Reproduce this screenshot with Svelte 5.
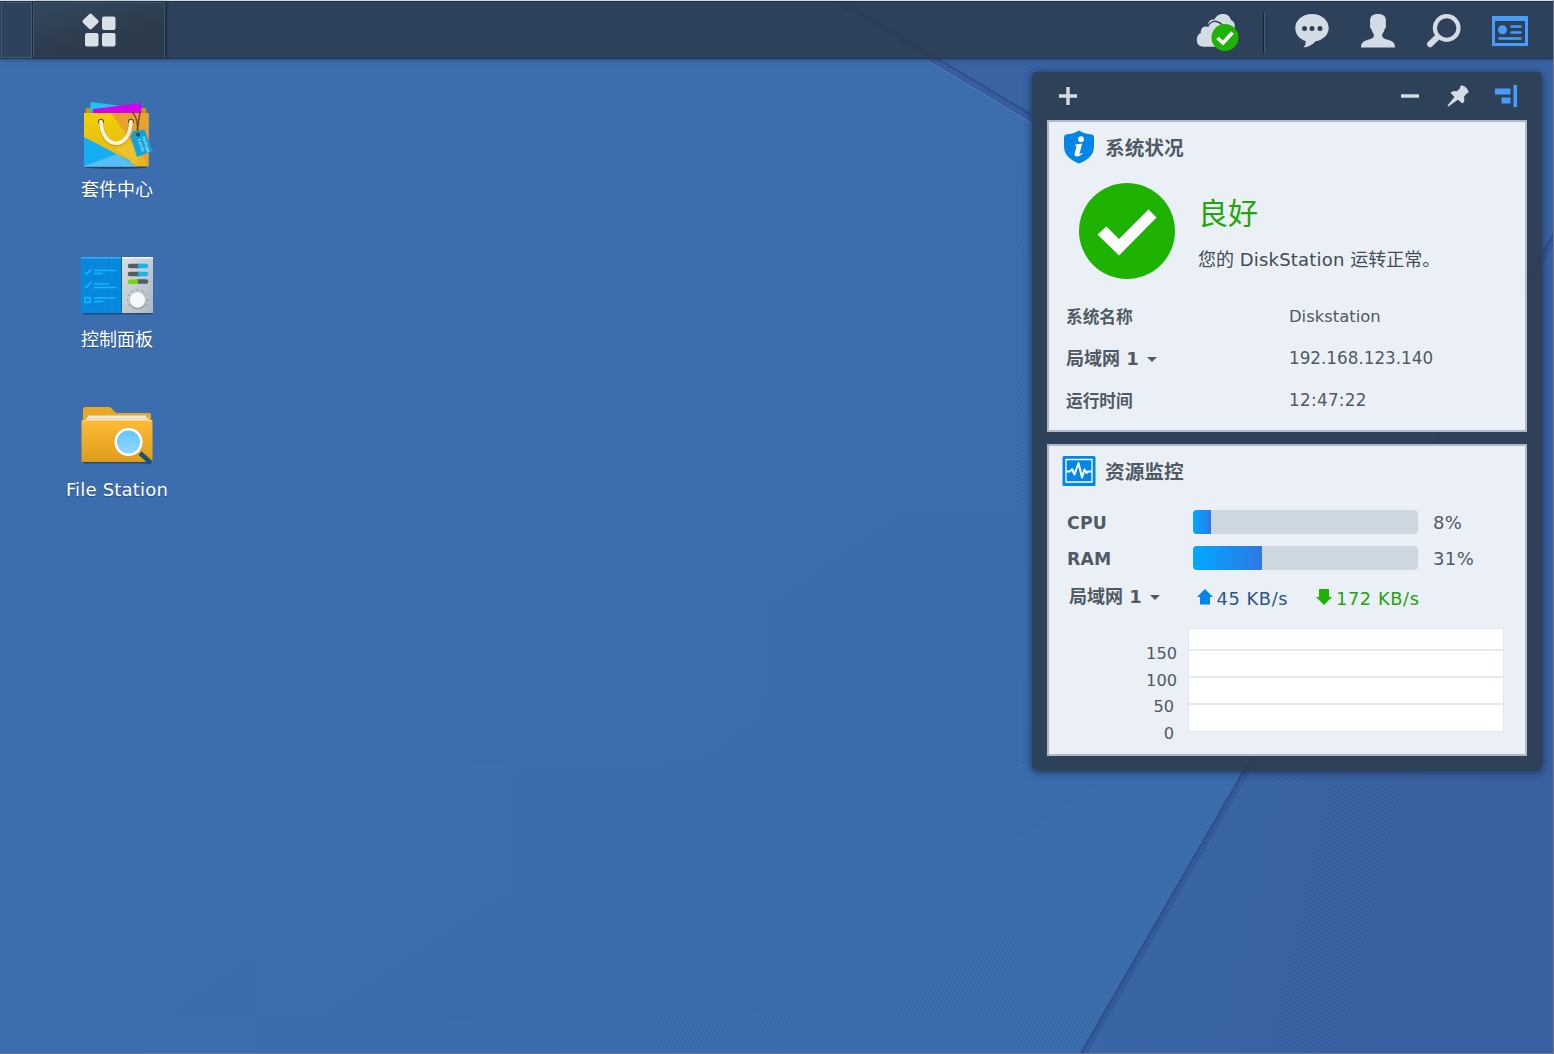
<script>
  const info = [
    { label: '系统名称', value: 'Diskstation', cls: 'name' },
    { label: '局域网 1', value: '192.168.123.140', cls: 'ip', menu: true },
    { label: '运行时间', value: '12:47:22', cls: 'time' }
  ];
  const meters = [
    { label: 'CPU', value: 8 },
    { label: 'RAM', value: 31 }
  ];
  const ticks = [150, 100, 50, 0];
  const knobDots = [-120, -90, -60, -30, 0, 30, 60, 90, 120];
</script>

<div class="desktop">
  <svg class="wallpaper" width="1554" height="1054" viewBox="0 0 1554 1054" aria-hidden="true">
    <defs>
      <linearGradient id="base" x1="0" y1="0" x2="1" y2="1">
        <stop offset="0" stop-color="#3d6fb0" />
        <stop offset="1" stop-color="#3a6cae" />
      </linearGradient>
      <linearGradient id="fold" x1="0" y1="0" x2="1" y2="0.4">
        <stop offset="0" stop-color="#3969a7" />
        <stop offset="1" stop-color="#3960a0" />
      </linearGradient>
      <pattern id="weave" width="4" height="4" patternUnits="userSpaceOnUse">
        <rect width="2" height="1" fill="#20467f" opacity=".13" />
        <rect x="2" y="2" width="2" height="1" fill="#20467f" opacity=".13" />
        <rect x="2" y="1" width="1" height="1" fill="#5f91cc" opacity=".14" />
        <rect y="3" width="1" height="1" fill="#5f91cc" opacity=".14" />
      </pattern>
    </defs>
    <rect width="1554" height="1054" fill="url(#base)" />
    <path d="M838 0 1468 375 1554 232V0z" fill="#3a64a4" />
    <path d="M1080 1054 1554 232V1054z" fill="url(#fold)" />
    <path d="M827 0H838L1468 375V383z" fill="#375d9f" />
    <path d="M839 0 1468 375" stroke="#2c4f86" stroke-width="1.800" />
    <path d="M826 0 1468 385" stroke="#4d7dba" stroke-width="1.200" />
    <path d="M1080 1054 1554 232V244L1087 1054z" fill="#335a9b" />
    <path d="M1080.500 1054 1554 233" stroke="#2c5089" stroke-width="2" />
    <rect width="1554" height="1054" fill="url(#weave)" />
  </svg>

  <header class="taskbar">
    <div class="show-desktop"></div>
    <div class="main-menu">
      <svg width="36" height="36" viewBox="0 0 36 36">
        <g fill="#d8e0ea">
          <rect x="3.300" y="2.300" width="12.400" height="12.400" rx="2" transform="rotate(45 9.500 8.500)" />
          <rect x="21" y="3.500" width="13.500" height="13.500" rx="2" />
          <rect x="4" y="20" width="13.500" height="13.500" rx="2" />
          <rect x="21" y="20" width="13.500" height="13.500" rx="2" />
        </g>
      </svg>
    </div>
    <nav class="tray">
      <svg class="cloud" width="44" height="40" viewBox="0 0 44 40">
        <g fill="#d3dbe5">
          <path d="M12 13c0-4 3-6 6.500-5.500C20.500 3.500 23 2 27 2c4 0 7 2 8 6 3.500 1.500 4.500 5 3.500 8l-2 6-17-6z" />
          <path d="M7 35.500C2.500 35 0 32 0 28s2-6.500 4-7.500c-.5-4 3-8 8-6.500C14 10 18 8.500 22 10s6 5 6 8l8 8-6 9.500z" stroke="#2f415a" stroke-width="1.600" />
        </g>
        <circle cx="29" cy="25.500" r="13.500" fill="#1eb302" />
        <path d="M21.500 26 27 31 36.500 20.500" fill="none" stroke="#fff" stroke-width="3.600" />
      </svg>
      <span class="separator"></span>
      <svg class="chat" width="34" height="36" viewBox="0 0 34 36">
        <path fill="#d3dbe5" d="M17 1C7.500 1 .3 7.300.3 15c0 6.200 4.300 11.300 10.200 13 .5 2.600-.3 4.700-2 6.500 5.500-.5 9.500-3 12-6.200C28 27 33.700 22 33.700 15 33.700 7.300 26.500 1 17 1z" />
        <g fill="#2f415a"><circle cx="9.500" cy="15.500" r="2.500" /><circle cx="17" cy="15.500" r="2.500" /><circle cx="25" cy="15.500" r="2.500" /></g>
      </svg>
      <svg class="user" width="34" height="36" viewBox="0 0 34 36">
        <path fill="#d3dbe5" d="M17 1c5.500 0 8 2.500 8 7 0 1.500-.2 2.500-.3 3.500.8 1 .3 3.500-1 4.500C23 19 21.500 20.500 21 22c0 2.500 1.500 3.500 5 4.500 5.500 1.500 8 3 8 8H0c0-5 2.500-6.500 8-8 3.500-1 5-2 5-4.500-.5-1.500-2-3-2.700-6-1.300-1-1.800-3.500-1-4.500C9.200 10.500 9 9.500 9 8c0-4.500 2.500-7 8-7z" />
      </svg>
      <svg class="search" width="34" height="36" viewBox="0 0 34 36">
        <circle cx="19.700" cy="15" r="11.800" fill="none" stroke="#d3dbe5" stroke-width="4.200" />
        <path d="m12 23-3 3" stroke="#d3dbe5" stroke-width="4" />
        <path d="m9 25.500-6 5.700" stroke="#d3dbe5" stroke-width="6" stroke-linecap="round" />
      </svg>
      <svg class="widgets" width="36" height="36" viewBox="0 0 36 36">
        <g fill="none" stroke="#479df9">
          <path stroke-width="3" d="M1.500 5H34.500V31.500H1.500z" />
          <path stroke-width="5" d="M0 5.500H36" />
          <path stroke-width="2.600" stroke-linecap="round" d="M19.500 13.500h9M19.500 19.500h9M7.500 25.500h21" />
        </g>
        <circle cx="10.500" cy="16.700" r="4.500" fill="#479df9" />
      </svg>
    </nav>
  </header>

  <main class="workspace">
    <div class="launchers">
      <div class="launcher">
        <svg width="76" height="72" viewBox="0 1 76 72">
          <defs>
            <linearGradient id="gold" x1="0" y1="0" x2="0" y2="1"><stop offset="0" stop-color="#f1d005" /><stop offset="1" stop-color="#e2b51c" /></linearGradient>
          </defs>
          <ellipse cx="36" cy="68" rx="32" ry="1.800" fill="#18304f" opacity=".7" />
          <path fill="#c9940e" d="M6 9h4v12H4zM60 9h6l1 12h-7z" />
          <path fill="#20c5ef" d="M11 3 50 8 48 20H9z" />
          <path fill="#d500f0" d="M13 10 61 4 62 20H12z" />
          <path fill="url(#gold)" d="M4 14H68.500V67.500H4z" />
          <path fill="#e8a12c" d="M31 14H68.500V67z" />
          <path fill="#f3c33c" d="M36 50 57 43V67z" opacity=".65" />
          <path fill="#14adf4" d="M4 38 50 62V67.500H4z" />
          <path fill="#57bff7" d="M4 67 37 55 57 67.500H4z" />
          <circle cx="21" cy="22.500" r="2.800" fill="#493b1e" /><circle cx="51" cy="22.500" r="2.800" fill="#493b1e" />
          <path d="M21 22.500C22 52 50 53 51 22.500" fill="none" stroke="#a88420" stroke-width="5" opacity=".45" />
          <path d="M21 22.500C22 51 50 52 51 22.500" fill="none" stroke="#fff5df" stroke-width="3.600" stroke-linecap="round" />
          <path d="M52 13Q59 19 57 35M60 13Q58 23 57.500 35" fill="none" stroke="#604b26" stroke-width="1.300" />
          <path fill="#13a3dc" d="M53.500 32 64.500 30.500 72.500 52 57 58 50.500 37.500z" />
          <circle cx="58" cy="35.500" r="2" fill="#48442c" />
          <text class="tag" transform="translate(62 38) rotate(71)"><tspan x="0" y="0">Package</tspan><tspan x="1" y="5">Center</tspan></text>
        </svg>
        <span>套件中心</span>
      </div>

      <div class="launcher">
        <svg width="76" height="72" viewBox="0 0 76 72">
          <defs>
            <linearGradient id="board" x1="0" y1="0" x2="1" y2="1"><stop offset="0" stop-color="#d8dfe4" /><stop offset="1" stop-color="#aeb8bf" /></linearGradient>
          </defs>
          <rect x="2" y="61" width="71" height="3.500" rx="2" fill="#173456" opacity=".6" />
          <path fill="#0789df" d="M1 8H42V63H1z" />
          <path fill="#35b0f2" d="M1 7H41V8.500H1z" />
          <path stroke="#0878c6" stroke-width=".6" opacity=".4" d="M1 14H42M1 21H42M1 28H42M1 35H42M1 42H42M1 49H42M1 56H42M8 8V63M15 8V63M22 8V63M29 8V63M36 8V63" />
          <path fill="url(#board)" d="M41.500 7H73V63H41.500z" />
          <path fill="#f3f6f7" d="M41.500 7H73V8.500H41.500z" />
          <path stroke="#0865ad" d="M41.500 7V63" />
          <g fill="none" stroke="#14b8ff" stroke-width="1.500">
            <path d="m5 22 2 2 4-5M5 35.500l2 2 4-5M5 47.500h5v5H5zM14 20.500h22M14 23.500h9M14 34h15M14 37.500h22M14 48h22M14 51.500h9" />
          </g>
          <g stroke-width="4.500" stroke-linecap="round">
            <path stroke="#505c66" d="M50 16h10M50 24h10M58 31.500h8" />
            <path stroke="#13b8ef" d="M60 16h6M60 24h6" /><path stroke="#76d608" d="M50 31.800h6" />
          </g>
          <g fill="#7e888f">
            {#each knobDots as a}<circle cx="57.500" cy="40" r=".65" transform="rotate({a} 57.500 50)" />{/each}
          </g>
          <circle cx="57.500" cy="51.500" r="8" fill="#7e8b95" opacity=".6" />
          <circle cx="57.500" cy="50" r="7.700" fill="#f4f8fa" />
        </svg>
        <span>控制面板</span>
      </div>

      <div class="launcher">
        <svg width="76" height="72" viewBox="0 0 76 72">
          <defs>
            <linearGradient id="folder" x1="0" y1="0" x2="0" y2="1"><stop offset="0" stop-color="#ffbb38" /><stop offset="1" stop-color="#dc9c1b" /></linearGradient>
            <linearGradient id="lens" x1="0" y1="0" x2="0" y2="1"><stop offset="0" stop-color="#62c4fa" /><stop offset="1" stop-color="#92dafd" /></linearGradient>
          </defs>
          <rect x="3" y="60" width="69" height="3.500" rx="2" fill="#173456" opacity=".6" />
          <path fill="#e9a722" d="M3 9q0-2 2-2H29q2 0 3 2l3 3q1 1 3 1H69q2 0 2 2V30H3z" />
          <path fill="#d4c39c" d="M6 17H69V22H6z" /><path fill="#eeeae0" d="M8 15.500H66V18H8zM6 18.500H68V21H6z" />
          <rect x="1.500" y="20" width="71" height="42" rx="1.500" fill="url(#folder)" />
          <path stroke="#ffd269" d="M2 20.500H72" />
          <path stroke="#165373" stroke-width="4.500" d="m60 53 11 10" />
          <path stroke="#aabcc4" stroke-width="2" d="m57 50 3 3" />
          <circle cx="48.500" cy="42" r="12.800" fill="url(#lens)" stroke="#fff" stroke-width="2.500" />
        </svg>
        <span class="latin">File Station</span>
      </div>
    </div>
  </main>

  <aside class="panel">
    <div class="toolbar">
      <svg class="add" width="20" height="20" viewBox="0 0 20 20"><path stroke="#d3dbe5" stroke-width="3.400" d="M10 1V19M1 10H19" /></svg>
      <svg class="minus" width="20" height="20" viewBox="0 0 20 20"><path stroke="#d3dbe5" stroke-width="3.500" d="M1 10H19" /></svg>
      <svg class="pin" width="22" height="22" viewBox="0 0 22 22"><path fill="#d3dbe5" d="M13 1.500Q14 0 15.500.5q4.500 1.500 6 6 .6 1.800-1.700 1.800l-3 3.700q1.700 3.500-1.300 6.500l-4.700-3.700L1.500 21.500.5 20.500 7.500 12 3.500 7.800q2.500-2.800 6.500-1.500L13.300 3z" /></svg>
      <svg class="dock" width="22" height="22" viewBox="0 0 22 22"><path fill="#479df9" d="M0 3.500H15.500V9.500H0zM6.500 12.500H15.500V18.500H6.500zM18.500 0H22V22H18.500z" /></svg>
    </div>

    <section class="card">
      <h2>
        <svg width="34" height="34" viewBox="0 0 34 34">
          <path fill="#0086e8" d="M17 .5Q22 4 30 4.500 32 5 32 7V16Q32 28 17 33.500 2 28 2 16V7Q2 5 4 4.500 12 4 17 .5z" />
          <circle cx="19" cy="9.200" r="2.900" fill="#fff" /><path fill="#fff" d="m13.500 14.500 6.700-1-2.700 10q-.3 1.500 2.500-.8l.7.700Q17.700 26.500 15 26.500q-3.200 0-2.300-3.300l1.700-6q.4-1.700-1.300-1.500z" />
        </svg>
        <span>系统状况</span>
      </h2>
      <div class="health">
        <svg width="96" height="96" viewBox="0 0 96 96"><circle cx="48" cy="48" r="48" fill="#1eb302" /><path fill="#fff" d="M18.500 51.500 27.500 43.500 40 56 69.500 26.500 77.500 34.500 40 72.500z" /></svg>
        <div class="verdict">
          <strong>良好</strong>
          <p>您的 <span>DiskStation</span> 运转正常。</p>
        </div>
      </div>
      <dl>
        {#each info as row}
          <div class="info">
            <dt class:menu={row.menu}>{row.label}{#if row.menu}<i class="caret"></i>{/if}</dt>
            <dd class={row.cls}>{row.value}</dd>
          </div>
        {/each}
      </dl>
    </section>

    <section class="card">
      <h2 class="resources">
        <svg width="34" height="34" viewBox="0 0 34 34">
          <rect x=".5" y="2" width="33" height="30" rx="1.500" fill="#0086e8" />
          <path fill="none" stroke="#fff" stroke-width="1.300" d="M4 5.500H30V28H4z" />
          <path fill="none" stroke="#fff" stroke-width="2" stroke-linejoin="round" d="M4.500 17.500h3.500l2-2.500 2.500 5.500L16.500 9l3.500 14.500 2.500-8 2 3.500 1.500-1.500h4" />
        </svg>
        <span>资源监控</span>
      </h2>
      <div class="meters">
        {#each meters as m}
          <div class="meter">
            <b>{m.label}</b>
            <div class="track"><div class="fill" style="width: {Math.floor(m.value * 2.25)}px"></div></div>
            <span>{m.value}%</span>
          </div>
        {/each}
      </div>
      <div class="network">
        <div class="lan">局域网 1<i class="caret"></i></div>
        <svg width="16" height="16" viewBox="0 0 16 16"><path fill="#0086e8" d="M8 0 16 8H13V15.500H3V8H0z" /></svg>
        <span class="up">45 KB/s</span>
        <svg width="16" height="16" viewBox="0 0 16 16"><path fill="#1eb302" d="M3 0H13V8H16L8 16 0 8H3z" /></svg>
        <span class="down">172 KB/s</span>
      </div>
      <div class="chart">
        <div class="axis">{#each ticks as t}<span class:small={t < 100}>{t}</span>{/each}</div>
        <div class="plot"><i></i><i></i><i></i><i></i></div>
      </div>
    </section>
  </aside>
</div>

<style>
  :global(body) { margin: 0; overflow: hidden; }
  .desktop {
    position: relative; width: 1554px; height: 1054px; overflow: hidden; box-sizing: border-box;
    font-family: "DejaVu Sans", "Noto Sans CJK SC", sans-serif; color: #505a64;
  }
  .desktop::after { content: ""; position: absolute; inset: 0; border: solid #6e7889; border-width: 0 1px 1px 0; pointer-events: none; }
  svg { display: block; flex: none; }
  .wallpaper { position: absolute; inset: 0; }

  .taskbar {
    position: relative; display: flex; height: 59px; box-sizing: border-box;
    border-top: 1px solid #d5dde2; border-bottom: 1px solid #25374f;
    background: rgba(44, 60, 79, .87); box-shadow: inset 0 1px #1f3147, 0 1px 4px rgba(20, 40, 80, .5);
  }
  .show-desktop { width: 31px; margin: 1px 0 0 1px; box-sizing: border-box; border: 1px solid #435970; }
  .main-menu {
    display: flex; align-items: center; justify-content: center; width: 132px; margin: 1px 0 0 1px; box-sizing: border-box;
    border: solid #40556c; border-width: 1px 1px 0; background: linear-gradient(165deg, #33475d, #2c3b4b 65%);
    box-shadow: -1px 0 #1b2a3c, 2px 0 2px #1d2c40;
  }
  .main-menu svg { margin-top: 1px; }
  .tray { display: flex; align-items: center; margin-left: auto; padding: 3px 26px 0 0; }
  .cloud { margin: 1px 23px 0 0; }
  .separator { width: 1px; height: 40px; margin: 3px 30px 0 0; border-left: 1px solid #142030; background: #4a5a70; }
  .chat, .user { margin-right: 32px; }
  .search { margin-right: 31px; }

  .workspace { position: relative; padding: 39px 0 0 42px; }
  .launchers { display: flex; flex-direction: column; gap: 26px; width: 150px; }
  .launcher { display: flex; flex-direction: column; align-items: center; height: 124px; box-sizing: border-box; padding-top: 2px; color: #fff; font-size: 18px; }
  .launcher svg { margin-left: 2px; }
  .launcher > span { margin-top: 6px; line-height: 24px; text-shadow: 0 1px 1px rgba(0, 20, 60, .35); white-space: nowrap; }
  .launcher .latin { font-size: 18px; letter-spacing: .2px; }
  .tag { font-size: 4px; fill: #d7f4ff; }

  .panel {
    position: absolute; left: 1032px; top: 72px; width: 510px; height: 699px; box-sizing: border-box; padding: 0 15px;
    border-radius: 5px; background: rgba(44, 60, 79, .88); box-shadow: 0 1px 8px rgba(15, 30, 60, .75);
  }
  .toolbar { display: flex; align-items: center; height: 48px; padding: 0 10px 0 11px; }
  .minus { margin-left: auto; margin-right: 27px; }
  .pin { margin-right: 26px; }
  .card { height: 312px; box-sizing: border-box; border: 2px solid #adb9c6; background: #ebf0f7; }
  .card + .card { margin-top: 12px; }
  h2 { display: flex; align-items: center; gap: 9px; height: 50px; margin: 0; padding-left: 13px; font-size: 19.700px; font-weight: 700; line-height: 30px; }
  h2 span { margin-top: 3px; }
  .health { display: flex; height: 96px; margin: 11px 0 0 30px; gap: 23px; }
  .verdict { display: flex; flex-direction: column; white-space: nowrap; }
  .verdict strong { height: 62px; color: #22a50a; font-size: 30px; font-weight: 400; line-height: 62px; }
  .verdict p { margin: 0; font-size: 18px; line-height: 29px; color: #414b55; }
  .verdict p span { letter-spacing: .2px; }
  dl { margin: 16px 0 0; }
  .info { display: flex; height: 42px; align-items: center; padding-left: 17px; }
  dt { width: 223px; margin-top: -1px; font-weight: 700; font-size: 16.700px; }
  dt.menu { margin-top: -2px; font-size: 18px; }
  dd { margin: 0; font-size: 16.400px; }
  .ip { font-size: 16.800px; }
  .time { font-size: 16.800px; letter-spacing: .3px; }
  .caret { display: inline-block; margin: 0 0 3px 8.500px; border: 5px solid transparent; border-top-color: #505a64; border-bottom: 0; }
  .meters { display: flex; flex-direction: column; gap: 12px; margin-top: 14px; padding-left: 18px; }
  .meter { display: flex; align-items: center; height: 24px; font-size: 17.300px; }
  .meter b { width: 126px; padding-top: 2px; letter-spacing: .2px; }
  .track { width: 225px; height: 24px; border-radius: 4px; overflow: hidden; background: #cdd7e0; }
  .fill { height: 100%; background: linear-gradient(90deg, #00a9ff, #2f78e4); }
  .meter span { margin-left: 15px; font-size: 18px; letter-spacing: .4px; }
  .network { display: flex; align-items: center; height: 26px; margin-top: 14px; padding-left: 20px; font-size: 17.800px; white-space: nowrap; }
  .lan { width: 128px; margin-top: -4px; font-size: 18px; font-weight: 700; }
  .network svg { margin-top: -1px; }
  .up { width: 99px; margin-left: 3.500px; padding-top: 2px; color: #28538b; letter-spacing: .6px; }
  .down { margin-left: 4.500px; padding-top: 2px; color: #27a111; letter-spacing: .6px; }
  .chart { display: flex; margin-top: 18px; }
  .axis { display: flex; flex-direction: column; align-items: flex-end; width: 128px; padding: 13px 10.500px 0 0; font-size: 16.200px; line-height: 26.700px; }
  .axis .small { padding-right: 3px; }
  .plot { display: flex; flex-direction: column; width: 316px; height: 104px; box-sizing: border-box; border: 1px solid #dfe9f3; background: #fff; }
  .plot i { flex: 0 0 27px; box-sizing: border-box; border-bottom: 2px solid #e2ebf4; }
  .plot i:first-child { flex-basis: 22px; }
  .plot i:last-child { flex: 1; border: 0; }
</style>
